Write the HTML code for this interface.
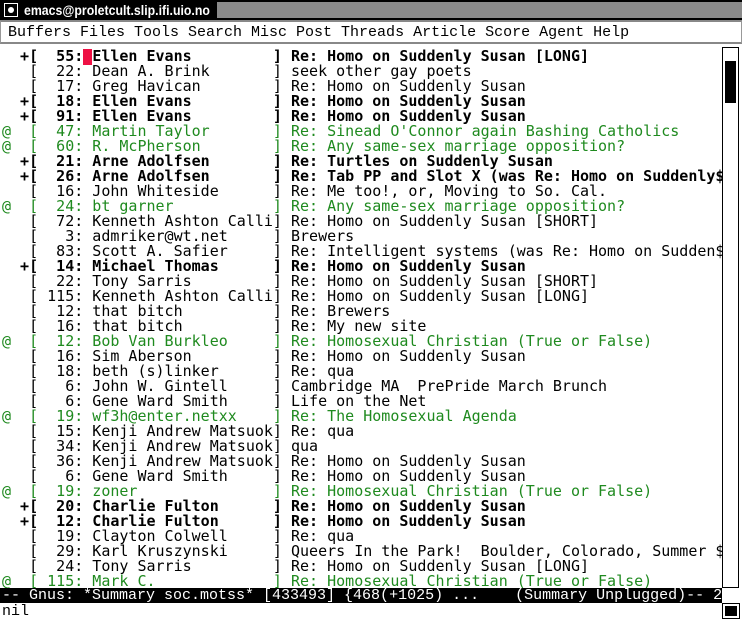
<!DOCTYPE html>
<html><head><meta charset="utf-8"><style>
body{margin:0;width:742px;height:620px;background:#fff;overflow:hidden;position:relative;font-family:"Liberation Mono",monospace;}
#title{position:absolute;left:0;top:0;width:742px;height:20px;background:#000;}
#hatch{position:absolute;left:217px;top:2px;width:525px;height:16px;background:#8a8a8a;}
#icon{position:absolute;left:4px;top:3px;width:12px;height:12px;border:1px solid #fff;background:#000;}
#icon:after{content:"";position:absolute;left:3px;top:3px;width:6px;height:6px;border-radius:3px;background:#fff;}
#ttext{position:absolute;left:24px;top:1px;color:#fff;font:bold 14px "Liberation Sans",sans-serif;line-height:18px;white-space:nowrap;transform:scaleX(0.88);transform-origin:0 0;}
#menu{position:absolute;left:0;top:20px;border:1px solid #999;border-top:2px solid #888;border-bottom:2px solid #888;background:#fff;box-sizing:border-box;width:742px;height:24px;}
#menu span{position:absolute;left:7px;top:3px;font-size:15px;line-height:16px;white-space:pre;}
#txt{position:absolute;left:2px;top:49px;width:720px;overflow:hidden;font-size:15px;line-height:15px;white-space:pre;margin:0;}
.b{font-weight:bold}.g{color:#1f8a1f}
.cur{background:#ee1144;}
#mode{position:absolute;left:0;top:588px;width:722px;height:15px;background:#000;color:#fff;font-size:15px;line-height:15px;white-space:pre;padding-left:2px;box-sizing:border-box;overflow:hidden;}
#mini{position:absolute;left:2px;top:604px;font-size:15px;line-height:15px;}
#sb{position:absolute;left:722px;top:47px;width:17px;height:541px;border:1px solid #000;box-sizing:border-box;}
#thumb{position:absolute;left:2px;top:13px;width:11px;height:42px;background:#000;}
#box{position:absolute;left:722px;top:603px;width:18px;height:16px;border:1px solid #000;box-sizing:border-box;}
#box div{position:absolute;left:2px;top:2px;width:12px;height:10px;background:#000;}
</style></head><body>
<div id="title"><div id="hatch"></div><div id="icon"></div><div id="ttext">emacs@proletcult.slip.ifi.uio.no</div></div>
<div id="menu"><span>Buffers Files Tools Search Misc Post Threads Article Score Agent Help</span></div>
<pre id="txt"><span class="b">  +[  55:<span class="cur"> </span>Ellen Evans         ] Re: Homo on Suddenly Susan [LONG]</span>
   [  22: Dean A. Brink       ] seek other gay poets
   [  17: Greg Havican        ] Re: Homo on Suddenly Susan
<span class="b">  +[  18: Ellen Evans         ] Re: Homo on Suddenly Susan</span>
<span class="b">  +[  91: Ellen Evans         ] Re: Homo on Suddenly Susan</span>
<span class="g">@  [  47: Martin Taylor       ] Re: Sinead O'Connor again Bashing Catholics</span>
<span class="g">@  [  60: R. McPherson        ] Re: Any same-sex marriage opposition?</span>
<span class="b">  +[  21: Arne Adolfsen       ] Re: Turtles on Suddenly Susan</span>
<span class="b">  +[  26: Arne Adolfsen       ] Re: Tab PP and Slot X (was Re: Homo on Suddenly$</span>
   [  16: John Whiteside      ] Re: Me too!, or, Moving to So. Cal.
<span class="g">@  [  24: bt garner           ] Re: Any same-sex marriage opposition?</span>
   [  72: Kenneth Ashton Calli] Re: Homo on Suddenly Susan [SHORT]
   [   3: admriker@wt.net     ] Brewers
   [  83: Scott A. Safier     ] Re: Intelligent systems (was Re: Homo on Sudden$
<span class="b">  +[  14: Michael Thomas      ] Re: Homo on Suddenly Susan</span>
   [  22: Tony Sarris         ] Re: Homo on Suddenly Susan [SHORT]
   [ 115: Kenneth Ashton Calli] Re: Homo on Suddenly Susan [LONG]
   [  12: that bitch          ] Re: Brewers
   [  16: that bitch          ] Re: My new site
<span class="g">@  [  12: Bob Van Burkleo     ] Re: Homosexual Christian (True or False)</span>
   [  16: Sim Aberson         ] Re: Homo on Suddenly Susan
   [  18: beth (s)linker      ] Re: qua
   [   6: John W. Gintell     ] Cambridge MA  PrePride March Brunch
   [   6: Gene Ward Smith     ] Life on the Net
<span class="g">@  [  19: wf3h@enter.netxx    ] Re: The Homosexual Agenda</span>
   [  15: Kenji Andrew Matsuok] Re: qua
   [  34: Kenji Andrew Matsuok] qua
   [  36: Kenji Andrew Matsuok] Re: Homo on Suddenly Susan
   [   6: Gene Ward Smith     ] Re: Homo on Suddenly Susan
<span class="g">@  [  19: zoner               ] Re: Homosexual Christian (True or False)</span>
<span class="b">  +[  20: Charlie Fulton      ] Re: Homo on Suddenly Susan</span>
<span class="b">  +[  12: Charlie Fulton      ] Re: Homo on Suddenly Susan</span>
   [  19: Clayton Colwell     ] Re: qua
   [  29: Karl Kruszynski     ] Queers In the Park!  Boulder, Colorado, Summer $
   [  24: Tony Sarris         ] Re: Homo on Suddenly Susan [LONG]
<span class="g">@  [ 115: Mark C.             ] Re: Homosexual Christian (True or False)</span></pre>
<div id="sb"><div id="thumb"></div></div>
<div id="mode">-- Gnus: *Summary soc.motss* [433493] {468(+1025) ...    (Summary Unplugged)-- 2</div>
<div id="mini">nil</div>
<div id="box"><div></div></div>
</body></html>
